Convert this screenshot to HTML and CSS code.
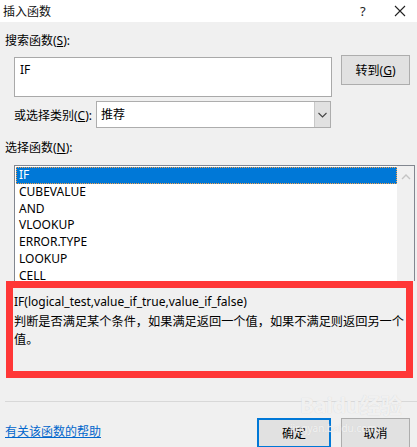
FILE: index.html
```html
<!DOCTYPE html>
<html lang="zh-CN">
<head>
    <meta charset="UTF-8">
    <title>插入函数</title>
    <link rel="stylesheet" href="styles.css">
</head>
<body>
    <div class="titlebar">
        <div class="title">插入函数</div>
        <div class="title-help">?</div>
        <div class="title-close">
            <svg width="12" height="12" viewBox="0 0 12 12"><path d="M1 1L11 11M11 1L1 11" stroke="#222" stroke-width="1.1" fill="none"/></svg>
        </div>
    </div>

    <div class="dialog">
        <div class="label search-label">搜索函数(<u>S</u>):</div>

        <div class="search-row">
            <div class="search-box">IF</div>
            <div class="button goto-button">转到(<u>G</u>)</div>
        </div>

        <div class="category-row">
            <div class="category-label">或选择类别(<u>C</u>):</div>
            <div class="select">
                <div class="select-value">推荐</div>
                <div class="select-arrow">
                    <svg width="9" height="6" viewBox="0 0 9 6"><path d="M0.5 1L4.5 5L8.5 1" stroke="#444" stroke-width="1.1" fill="none"/></svg>
                </div>
            </div>
        </div>

        <div class="label list-label">选择函数(<u>N</u>):</div>

        <div class="func-list">
            <div class="func-items">
                <div class="func-item selected">IF</div>
                <div class="func-item">CUBEVALUE</div>
                <div class="func-item">AND</div>
                <div class="func-item">VLOOKUP</div>
                <div class="func-item">ERROR.TYPE</div>
                <div class="func-item">LOOKUP</div>
                <div class="func-item">CELL</div>
            </div>
            <div class="scrollbar">
                <svg width="10" height="6" viewBox="0 0 10 6"><path d="M1 5L5 1L9 5" stroke="#c4c4c4" stroke-width="1.4" fill="none"/></svg>
                <svg width="10" height="6" viewBox="0 0 10 6"><path d="M1 1L5 5L9 1" stroke="#c4c4c4" stroke-width="1.4" fill="none"/></svg>
            </div>
        </div>

        <div class="description">
            <div class="syntax">IF(logical_test,value_if_true,value_if_false)</div>
            <div class="desc-text">判断是否满足某个条件，如果满足返回一个值，如果不满足则返回另一个值。</div>
        </div>

        <div class="separator"></div>

        <div class="footer">
            <a href="#" class="help-link">有关该函数的帮助</a>
            <div class="footer-buttons">
                <div class="button ok-button">确定</div>
                <div class="button cancel-button">取消</div>
            </div>
        </div>

        <!-- watermark -->
        <div class="watermark">
            <div class="wm-logo">Baidu经验</div>
            <div class="wm-url">jingyan.baidu.com</div>
        </div>
    </div>
</body>
</html>
```

FILE: styles.css
```css
body {
    margin: 0;
    font-family: "Noto Sans", "Noto Sans CJK SC", sans-serif;
    font-size: 12px;
    color: #000;
    background-color: #f0f0f0;
    width: 417px;
    height: 447px;
    overflow: hidden;
}

.titlebar {
    height: 22px;
    background-color: #fff;
    display: flex;
    align-items: center;
}

.title {
    flex: 1;
    padding-left: 3px;
    font-size: 12px;
    color: #111;
}

.title-help {
    width: 34px;
    font-size: 13px;
    color: #222;
}

.title-close {
    width: 23px;
    display: flex;
    align-items: center;
}

.dialog {
    position: relative;
    height: 425px;
}

.label {
    padding-left: 5px;
    line-height: 16px;
}

.search-label {
    padding-top: 11px;
}

.search-row {
    display: flex;
    align-items: flex-start;
    margin-top: 8px;
    margin-left: 14px;
}

.search-box {
    width: 306px;
    height: 32px;
    background-color: #fff;
    border: 1px solid #a9a9a9;
    padding: 4px 5px 2px;
    font-size: 12px;
    line-height: 16px;
}

.button {
    background-color: #e1e1e1;
    border: 1px solid #adadad;
    display: flex;
    align-items: center;
    justify-content: center;
    font-size: 12px;
    box-sizing: border-box;
}

.goto-button {
    width: 69px;
    height: 30px;
    margin-left: 9px;
    margin-top: -2px;
}

.category-row {
    display: flex;
    align-items: center;
    margin-top: 4px;
    margin-left: 14px;
}

.category-label {
    width: 82px;
}

.select {
    width: 235px;
    height: 27px;
    box-sizing: border-box;
    border: 1px solid #adadad;
    background-color: #fff;
    display: flex;
}

.select-value {
    flex: 1;
    padding-left: 4px;
    line-height: 25px;
}

.select-arrow {
    width: 15px;
    background-color: #e1e1e1;
    border-left: 1px solid #c8c8c8;
    display: flex;
    align-items: center;
    justify-content: center;
}

.list-label {
    padding-top: 12px;
}

.func-list {
    margin: 9px 2px 0 14px;
    height: 116px;
    box-sizing: border-box;
    border: 1px solid #828790;
    border-bottom: none;
    background-color: #fff;
    display: flex;
    overflow: hidden;
}

.func-items {
    flex: 1;
    padding: 1px 0 0 1px;
}

.func-item {
    height: 16.8px;
    line-height: 16.8px;
    padding-left: 3px;
    font-size: 12px;
}

.func-item.selected {
    background-color: #0078d7;
    color: #fff;
    outline: 1px dotted #f5a04a;
    outline-offset: -1px;
}

.scrollbar {
    width: 17px;
    background-color: #f0f0f0;
    display: flex;
    flex-direction: column;
    justify-content: space-between;
    align-items: center;
    padding: 8px 0 0;
    box-sizing: border-box;
}

.scrollbar svg:last-child {
    margin-bottom: -26px;
}

.description {
    margin: 0 4px 0 6px;
    height: 97px;
    box-sizing: border-box;
    border: 7px solid #ff3737;
    padding: 5px 0 0 1px;
}

.syntax {
    font-size: 12px;
    line-height: 17px;
    margin-bottom: 3px;
}

.desc-text {
    font-size: 12.2px;
    line-height: 18px;
}

.separator {
    margin: 23px 0 0 5px;
    border-top: 1px solid #d8d8d8;
}

.footer {
    display: flex;
    align-items: flex-start;
    margin-top: 16px;
    padding-left: 5px;
}

.help-link {
    flex: 1;
    color: #0066cc;
    text-decoration: underline;
    margin-top: 4px;
}

.footer-buttons {
    display: flex;
    gap: 10px;
    margin-right: 7px;
}

.ok-button {
    width: 74px;
    height: 30px;
    border: 2px solid #0078d7;
}

.cancel-button {
    width: 69px;
    height: 30px;
}

.watermark {
    position: absolute;
    left: 300px;
    top: 371px;
    color: rgba(255, 255, 255, 0.7);
    text-shadow: 0 0 1px #cfcfcf;
    pointer-events: none;
}

.wm-logo {
    font-size: 21px;
    font-weight: bold;
    line-height: 24px;
}

.wm-url {
    font-size: 10px;
    line-height: 12px;
    margin-top: 5px;
    margin-left: -10px;
}
```
